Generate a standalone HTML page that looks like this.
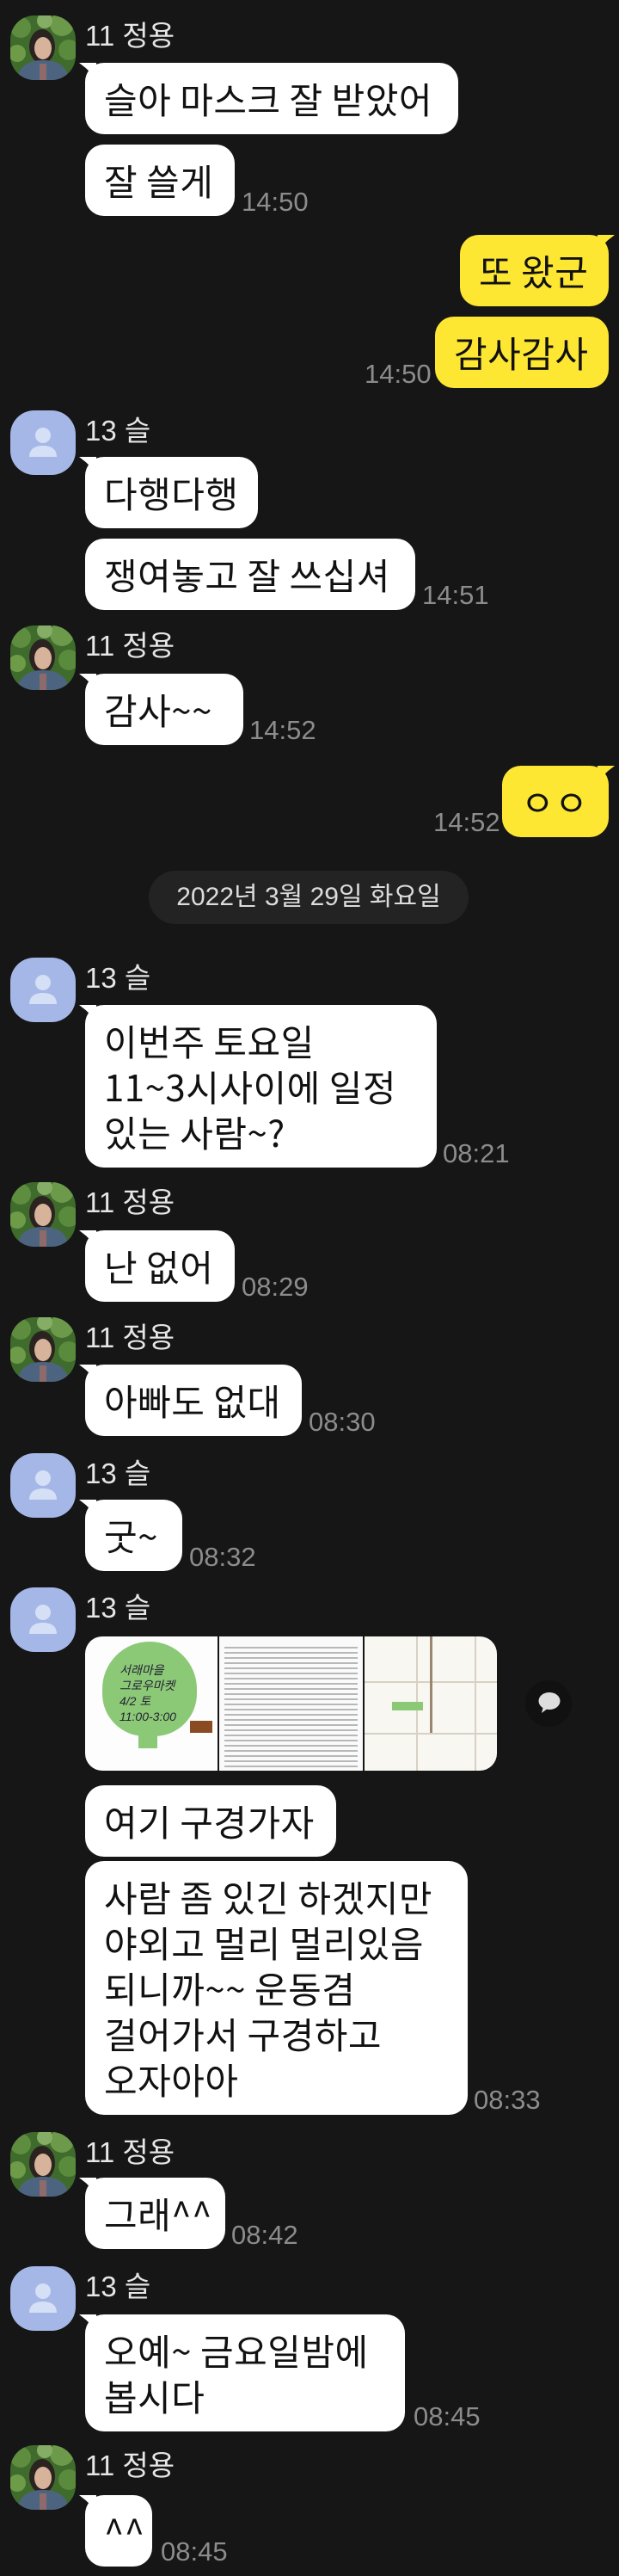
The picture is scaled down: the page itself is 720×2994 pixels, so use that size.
<!DOCTYPE html>
<html><head><meta charset="utf-8"><style>
*{margin:0;padding:0;box-sizing:border-box}
body{width:720px;height:2994px;background:#161616;position:relative;overflow:hidden;font-family:"Liberation Sans","Noto Sans CJK KR",sans-serif}
.av{position:absolute;left:12px;width:76px;height:75px;border-radius:28px;overflow:hidden}
.av.d{background:#a4b7e6}
.nm{position:absolute;left:99px;font-size:33px;line-height:36px;color:#e6e6e6;white-space:nowrap}
.b{position:absolute;background:#fff;color:#111;font-size:42px;line-height:53px;padding:15px 0 15px 22px;border-radius:22px;white-space:nowrap;overflow:visible;font-family:"Noto Sans CJK KR","Liberation Sans",sans-serif;letter-spacing:0.5px}
.b.l{left:99px}
.b.y{background:#fee733;right:12px}
.b.t.l::before{content:"";position:absolute;left:-7px;top:0;width:20px;height:18px;background:#fff;clip-path:polygon(0 0,100% 0,100% 100%,40% 35%)}
.b.t.y::before{content:"";position:absolute;right:-7px;top:0;width:20px;height:18px;background:#fee733;clip-path:polygon(0 0,100% 0,60% 35%,0 100%)}
.tm{position:absolute;font-size:31px;line-height:30px;color:#8c8c8c;white-space:nowrap}
</style></head><body>

<svg width="0" height="0" style="position:absolute"><defs>
<symbol id="ph" viewBox="0 0 76 75">
<rect width="76" height="75" fill="#3f6b2c"/>
<circle cx="12" cy="14" r="12" fill="#5f8d40"/><circle cx="60" cy="10" r="14" fill="#6c9a4a"/><circle cx="68" cy="40" r="12" fill="#5a8a3c"/><circle cx="8" cy="44" r="10" fill="#6d9b48"/><circle cx="40" cy="6" r="9" fill="#86ad66"/>
<ellipse cx="37" cy="36" rx="15" ry="20" fill="#2a2320"/>
<ellipse cx="38" cy="38" rx="10" ry="13" fill="#d6b39a"/>
<path d="M8 75 C10 58 22 52 38 52 C54 52 66 58 68 75Z" fill="#4d6480"/>
<rect x="34" y="56" width="8" height="19" fill="#8e6a6a"/>
</symbol>
<symbol id="df" viewBox="0 0 76 75">
<circle cx="38" cy="29" r="9" fill="#d5dff5"/>
<path d="M22 54 C22 44 30 41 38 41 C46 41 54 44 54 54Z" fill="#d5dff5"/>
</symbol>
</defs></svg>

<svg class="av" style="top:18px" viewBox="0 0 76 75"><use href="#ph"/></svg>
<div class="nm" style="top:24px">11 정용</div>
<div class="b l t" style="top:73px;width:434px">슬아 마스크 잘 받았어</div>
<div class="b l" style="top:168px;width:174px">잘 쓸게</div>
<div class="tm" style="left:281px;top:220px">14:50</div>

<div class="b y t" style="top:273px;width:173px">또 왔군</div>
<div class="b y" style="top:368px;width:202px">감사감사</div>
<div class="tm" style="left:424px;top:420px">14:50</div>

<div class="av d" style="top:477px"><svg width="76" height="75"><use href="#df"/></svg></div>
<div class="nm" style="top:483px">13 슬</div>
<div class="b l t" style="top:531px;width:201px">다행다행</div>
<div class="b l" style="top:626px;width:384px">쟁여놓고 잘 쓰십셔</div>
<div class="tm" style="left:491px;top:677px">14:51</div>

<svg class="av" style="top:727px" viewBox="0 0 76 75"><use href="#ph"/></svg>
<div class="nm" style="top:733px">11 정용</div>
<div class="b l t" style="top:783px;width:184px">감사~~</div>
<div class="tm" style="left:290px;top:834px">14:52</div>

<div class="b y t" style="top:890px;width:124px">ㅇㅇ</div>
<div class="tm" style="left:504px;top:941px">14:52</div>

<div style="position:absolute;left:173px;top:1012px;width:372px;height:62px;border-radius:31px;background:#232323;color:#dcdcdc;font-size:30px;line-height:62px;text-align:center">2022년 3월 29일 화요일</div>

<div class="av d" style="top:1113px"><svg width="76" height="75"><use href="#df"/></svg></div>
<div class="nm" style="top:1119px">13 슬</div>
<div class="b l t" style="top:1168px;width:409px">이번주 토요일<br>11~3시사이에 일정<br>있는 사람~?</div>
<div class="tm" style="left:515px;top:1326px">08:21</div>

<svg class="av" style="top:1374px" viewBox="0 0 76 75"><use href="#ph"/></svg>
<div class="nm" style="top:1380px">11 정용</div>
<div class="b l t" style="top:1430px;width:174px">난 없어</div>
<div class="tm" style="left:281px;top:1481px">08:29</div>

<svg class="av" style="top:1531px" viewBox="0 0 76 75"><use href="#ph"/></svg>
<div class="nm" style="top:1537px">11 정용</div>
<div class="b l t" style="top:1586px;width:252px">아빠도 없대</div>
<div class="tm" style="left:359px;top:1638px">08:30</div>

<div class="av d" style="top:1689px"><svg width="76" height="75"><use href="#df"/></svg></div>
<div class="nm" style="top:1695px">13 슬</div>
<div class="b l t" style="top:1743px;width:113px">굿~</div>
<div class="tm" style="left:220px;top:1795px">08:32</div>

<div class="av d" style="top:1845px"><svg width="76" height="75"><use href="#df"/></svg></div>
<div class="nm" style="top:1851px">13 슬</div>
<div style="position:absolute;left:99px;top:1902px;width:479px;height:156px;border-radius:20px;overflow:hidden;display:flex;gap:2px">
 <div style="flex:1;background:#fdfdfd;position:relative">
  <div style="position:absolute;left:20px;top:6px;width:110px;height:110px;border-radius:50% 50% 45% 45%;background:#8cc977"></div>
  <div style="position:absolute;left:62px;top:100px;width:22px;height:30px;background:#8cc977"></div>
  <div style="position:absolute;left:40px;top:30px;font-size:14px;color:#223;line-height:18px;font-style:italic">서래마을<br>그로우마켓<br>4/2 토<br>11:00-3:00</div>
  <div style="position:absolute;left:122px;top:98px;width:26px;height:14px;background:#8a4a22"></div>
 </div>
 <div style="flex:1;background:#fafafa;padding:8px 6px;overflow:hidden">
  <div style="height:150px;background:repeating-linear-gradient(#fafafa 0 4px,#b8b8b8 4px 6px)"></div>
 </div>
 <div style="flex:1;background:#f9f7f2;position:relative">
  <div style="position:absolute;left:0;top:52px;width:100%;height:2px;background:#d8d0c4"></div>
  <div style="position:absolute;left:0;top:112px;width:100%;height:2px;background:#d8d0c4"></div>
  <div style="position:absolute;left:60px;top:0;width:2px;height:100%;background:#d8d0c4"></div>
  <div style="position:absolute;left:128px;top:0;width:2px;height:100%;background:#d8d0c4"></div>
  <div style="position:absolute;left:76px;top:0;width:3px;height:112px;background:#9a8570"></div>
  <div style="position:absolute;left:32px;top:76px;width:36px;height:10px;background:#8cc977"></div>
 </div>
</div>
<div style="position:absolute;left:611px;top:1953px;width:54px;height:54px;border-radius:50%;background:#111"></div>
<svg style="position:absolute;left:625px;top:1966px" width="28" height="26" viewBox="0 0 28 26"><ellipse cx="14" cy="11" rx="12.5" ry="10" fill="#dedede"/><path d="M7 17 L5 25 L13 19Z" fill="#dedede"/></svg>
<div class="b l" style="top:2075px;width:292px">여기 구경가자</div>
<div class="b l" style="top:2163px;width:445px">사람 좀 있긴 하겠지만<br>야외고 멀리 멀리있음<br>되니까~~ 운동겸<br>걸어가서 구경하고<br>오자아아</div>
<div class="tm" style="left:551px;top:2426px">08:33</div>

<svg class="av" style="top:2478px" viewBox="0 0 76 75"><use href="#ph"/></svg>
<div class="nm" style="top:2484px">11 정용</div>
<div class="b l t" style="top:2531px;width:163px">그래^^</div>
<div class="tm" style="left:269px;top:2583px">08:42</div>

<div class="av d" style="top:2634px"><svg width="76" height="75"><use href="#df"/></svg></div>
<div class="nm" style="top:2640px">13 슬</div>
<div class="b l t" style="top:2690px;width:372px">오예~ 금요일밤에<br>봅시다</div>
<div class="tm" style="left:481px;top:2794px">08:45</div>

<svg class="av" style="top:2842px" viewBox="0 0 76 75"><use href="#ph"/></svg>
<div class="nm" style="top:2848px">11 정용</div>
<div class="b l t" style="top:2900px;width:78px">^^</div>
<div class="tm" style="left:187px;top:2951px">08:45</div>
</body></html>
